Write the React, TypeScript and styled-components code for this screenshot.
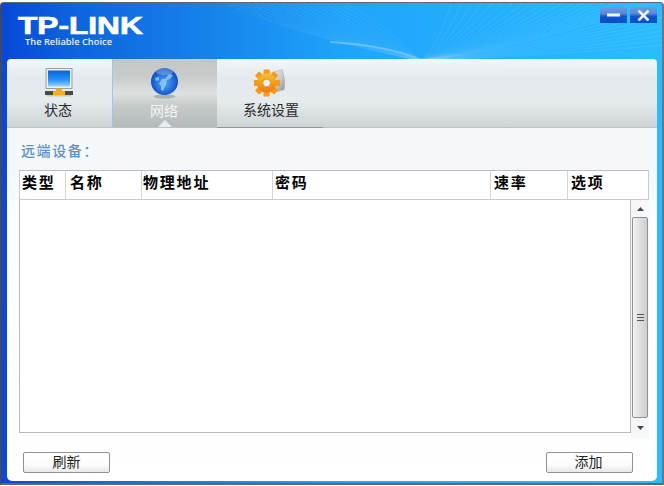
import React from "react";
import styled, { createGlobalStyle } from "styled-components";

const Global = createGlobalStyle`
  html, body { margin: 0; padding: 0; background: #fff; }
  body { font-family: "Noto Sans CJK SC", "Liberation Sans", sans-serif; }
  * { box-sizing: border-box; }
`;

const Page = styled.div`
  width: 664px;
  height: 486px;
  padding: 2px 0 1px;
`;

const Window = styled.div`
  position: relative;
  height: 483px;
  display: flex;
  flex-direction: column;
  padding: 0 5px 2px 5px;
  border: 2px solid #5f6670;
  border-top-width: 1px;
  border-right-color: #6a7680;
  border-left-color: #3c4a70;
  border-radius: 4px 4px 0 0;
  background: linear-gradient(90deg, #0748d8 0%, #0d62dc 10%, #1684ec 32%, #1fa4fb 52%, #2bbcff 100%);
  overflow: hidden;
`;

const Waves = styled.svg`
  position: absolute;
  left: 0;
  top: 0;
  pointer-events: none;
`;

const Header = styled.header`
  position: relative;
  height: 56px;
  flex: none;
  display: flex;
  justify-content: space-between;
  align-items: flex-start;
  padding: 14px 0 0 11px;
`;

const Logo = styled.div`
  display: flex;
  flex-direction: column;
  color: #fff;
  font-family: "Liberation Sans", sans-serif;
`;

const LogoMark = styled.div`
  font-size: 23px;
  line-height: 19px;
  font-weight: 700;
  transform: scaleX(1.375);
  transform-origin: left center;
  white-space: nowrap;
  -webkit-text-stroke: 0.7px #fff;
`;

const LogoTag = styled.div`
  font-family: "Open Sans", sans-serif;
  font-size: 9.3px;
  line-height: 11px;
  font-weight: 600;
  margin: 0 0 0 7px;
  color: #e8f2ff;
`;

const WinButtons = styled.div`
  display: flex;
  gap: 3px;
  margin-top: -10px;
`;

const WinButton = styled.button`
  width: 27px;
  height: 16px;
  padding: 0;
  border: 0;
  display: flex;
  align-items: center;
  justify-content: center;
  background: linear-gradient(180deg, #6c9be2 0%, #5a8ad8 40%, #0c55cc 60%, #0a50c8 100%);
`;

const TabBar = styled.nav`
  position: relative;
  flex: none;
  height: 69px;
  display: flex;
  border-radius: 4px 4px 0 0;
  background: linear-gradient(180deg, #f3f6f8 0%, #e3e9ee 30%, #e6ebed 62%, #cdd4d6 100%);
  border-bottom: 1px solid #bcc2c2;
`;

const Tab = styled.div<{ $active?: boolean; $w: number; $underline?: boolean }>`
  position: relative;
  width: ${(p) => p.$w}px;
  height: ${(p) => (p.$underline ? 69 : 68)}px;
  flex: none;
  display: flex;
  flex-direction: column;
  align-items: center;
  color: ${(p) => (p.$active ? "#f2f5f5" : "#2a2a2a")};
  font-size: 14px;
  line-height: 20px;
  padding-top: 7px;
  background: ${(p) =>
    p.$active
      ? "linear-gradient(180deg, #c3c7c6 0%, #c8cbca 25%, #dde1e1 50%, #c6cbca 68%, #b4baba 100%)"
      : "transparent"};
  border-left: ${(p) => (p.$active ? "1px solid #9cc8e4" : "0")};
  border-top: ${(p) => (p.$active ? "1px solid #a8d4ee" : "0")};
  border-bottom: ${(p) => (p.$underline ? "1px solid #8f9494" : "0")};
`;

const IconBox = styled.div<{ $shift: number }>`
  width: 32px;
  height: 32px;
  margin: 0 0 1px ${(p) => p.$shift}px;
  display: flex;
  align-items: center;
  justify-content: center;
`;

const TabLabel = styled.span<{ $shift: number }>`
  margin-left: ${(p) => p.$shift}px;
`;

const Notch = styled.span`
  position: absolute;
  left: 50%;
  bottom: 0;
  margin-left: -7px;
  width: 0;
  height: 0;
  border-left: 7px solid transparent;
  border-right: 7px solid transparent;
  border-bottom: 7px solid #e6f0f2;
`;

const Panel = styled.main`
  flex: 1;
  min-height: 0;
  display: flex;
  flex-direction: column;
  padding: 0 8px 0 12px;
  border-radius: 0 0 5px 5px;
  background: linear-gradient(180deg, #f4f8fa 0%, #f4f8fa 12%, #fbfcfd 25%, #fff 100%);
`;

const Title = styled.h2`
  margin: 12px 0 10px 2px;
  font-size: 14px;
  line-height: 20px;
  font-weight: 500;
  letter-spacing: 1.6px;
  color: #5b8fc9;
`;

const TableHead = styled.div`
  width: 630px;
  height: 30px;
  flex: none;
  display: grid;
  grid-template-columns: 45px 76px 131px 218px 77px 1fr;
  background: #fff;
  border: 1px solid #c8c9cb;
  border-top-color: #bcbdc0;
`;

const HeadCell = styled.div<{ $pad: number }>`
  padding-left: ${(p) => p.$pad}px;
  font-size: 15px;
  line-height: 22px;
  font-weight: 700;
  letter-spacing: 1.8px;
  color: #000;
  border-left: 1px solid #d4d5d7;
  &:first-child { border-left: 0; }
`;

const ListArea = styled.div`
  width: 630px;
  height: 238px;
  flex: none;
  display: flex;
  align-items: flex-start;
`;

const List = styled.div`
  width: 612px;
  height: 233px;
  background: #fff;
  border: 1px solid #b9babc;
  border-top: 0;
`;

const Scroll = styled.div`
  width: 18px;
  height: 238px;
  display: flex;
  flex-direction: column;
  background: #f6f7f8;
`;

const ScrollArrow = styled.div<{ $h: number }>`
  height: ${(p) => p.$h}px;
  flex: none;
  display: flex;
  align-items: center;
  justify-content: center;
`;

const Thumb = styled.div`
  flex: 1;
  margin: 0 1px;
  display: flex;
  align-items: center;
  justify-content: center;
  border: 1px solid #8e9092;
  border-radius: 2px;
  background: linear-gradient(90deg, #f2f2f2 0%, #e4e4e4 35%, #cdcdcd 100%);
`;

const Grip = styled.div`
  width: 7px;
  height: 7px;
  background: repeating-linear-gradient(180deg, #555 0 1px, transparent 1px 3px);
`;

const Actions = styled.footer`
  display: flex;
  justify-content: space-between;
  width: 610px;
  margin: 14px 0 0 4px;
`;

const Btn = styled.button<{ $nudge?: number }>`
  width: 87px;
  height: 21px;
  padding: 0 ${(p) => p.$nudge ?? 0}px 3px 0;
  font-family: inherit;
  font-size: 14px;
  line-height: 17px;
  color: #222;
  border: 1px solid #8f9294;
  border-radius: 2px;
  background: linear-gradient(180deg, #fff 0%, #fcfcfc 60%, #e6e8ec 100%);
`;

const Monitor = () => (
  <svg width="28" height="29" viewBox="0 0 28 29">
    <defs>
      <linearGradient id="scr" x1="0" y1="0" x2="0" y2="1">
        <stop offset="0" stopColor="#0a5fe0" />
        <stop offset="0.6" stopColor="#2a96f4" />
        <stop offset="1" stopColor="#9fd4fa" />
      </linearGradient>
    </defs>
    <rect x="1" y="0.5" width="26" height="20" fill="#eceff0" stroke="#9a9fa1" strokeWidth="1" />
    <rect x="3" y="2.5" width="22" height="16" fill="url(#scr)" />
    <rect x="11" y="20.5" width="6" height="2.5" fill="#f0a820" />
    <rect x="0" y="23" width="28" height="4" fill="#4d4a44" />
    <rect x="8" y="23" width="12" height="4" fill="#f5ae1e" />
    <rect x="2" y="27" width="24" height="1.5" fill="#c5c9ca" />
  </svg>
);

const Globe = () => (
  <svg width="29" height="32" viewBox="0 0 29 32">
    <defs>
      <radialGradient id="gl" cx="0.5" cy="0.55" r="0.6">
        <stop offset="0" stopColor="#5aa6f0" />
        <stop offset="0.65" stopColor="#1a66d8" />
        <stop offset="1" stopColor="#0a3aa8" />
      </radialGradient>
    </defs>
    <ellipse cx="14.5" cy="29.5" rx="11" ry="2" fill="#8f9494" opacity="0.6" />
    <circle cx="14.5" cy="14.5" r="13.5" fill="url(#gl)" />
    <path d="M9 17l3-5 3 0 4-5 4 1-3 4-3 1-1 5-3 6-2-1 0-4-2-2z M5 11l4-1 0 3-3 1z" fill="#8cc8f5" opacity="0.85" />
    <ellipse cx="14.5" cy="4.5" rx="9" ry="3.5" fill="#fff" opacity="0.25" />
  </svg>
);

const Gear = () => {
  const teeth = [0, 45, 90, 135, 180, 225, 270, 315];
  return (
    <svg width="33" height="29" viewBox="0 0 33 29">
      <defs>
        <linearGradient id="disc" x1="0" y1="0" x2="1" y2="1">
          <stop offset="0" stopColor="#f4f4f2" />
          <stop offset="0.6" stopColor="#c4c6c6" />
          <stop offset="1" stopColor="#85898a" />
        </linearGradient>
        <linearGradient id="gr" x1="0" y1="0" x2="0" y2="1">
          <stop offset="0" stopColor="#fbc02c" />
          <stop offset="1" stopColor="#ee7a10" />
        </linearGradient>
      </defs>
      <path d="M16 5 L29 1 Q33 11 31 22 L18 25 Z" fill="url(#disc)" stroke="#a5a8a8" strokeWidth="0.5" />
      <g transform="translate(13 15)">
        {teeth.map((a) => (
          <rect key={a} x="-3.2" y="-14" width="6.4" height="7" rx="1" fill="#f59a1c" transform={`rotate(${a})`} />
        ))}
        <circle r="10" fill="url(#gr)" />
        <circle r="4" fill="#f4efe0" stroke="#c46a10" strokeWidth="0.6" />
      </g>
    </svg>
  );
};

const fanRight = Array.from({ length: 30 }, (_, i) => {
  const t = i / 29;
  const ex = t < 0.7 ? 450 + (t / 0.7) * 212 : 662;
  const ey = t < 0.7 ? -2 : ((t - 0.7) / 0.3) * 42;
  const cx = 420 + (ex - 420) * 0.35 + 4;
  const cy = 57 + (ey - 57) * 0.12;
  return `M416 58 Q ${cx} ${cy}, ${ex} ${ey}`;
});

const fanLeft = Array.from({ length: 18 }, (_, i) => {
  const sx = 224 + i * 7;
  return `M${sx} 0 Q ${sx + 55} ${28 + i * 0.2}, 418 58`;
});

const columns: Array<[string, number]> = [
  ["类型", 2],
  ["名称", 4],
  ["物理地址", 1],
  ["密码", 2],
  ["速率", 3],
  ["选项", 3],
];

export default function App() {
  return (
    <Page>
      <Global />
      <Window>
        <Waves width="660" height="57" viewBox="0 0 660 57">
          {fanRight.map((d) => (
            <path key={d} d={d} fill="none" stroke="#fff" strokeOpacity="0.09" strokeWidth="1" />
          ))}
          {fanLeft.map((d) => (
            <path key={d} d={d} fill="none" stroke="#fff" strokeOpacity="0.08" strokeWidth="1" />
          ))}
          <path d="M328 39 C 365 41, 395 47, 420 57" fill="none" stroke="#bfe2ff" strokeOpacity="0.4" strokeWidth="2" />
        </Waves>
        <Header>
          <Logo>
            <LogoMark>TP-LINK</LogoMark>
            <LogoTag>The Reliable Choice</LogoTag>
          </Logo>
          <WinButtons>
            <WinButton aria-label="最小化">
              <svg width="13" height="4" viewBox="0 0 13 4"><rect width="13" height="3" y="0.5" fill="#eef4fc" /></svg>
            </WinButton>
            <WinButton aria-label="关闭">
              <svg width="13" height="11" viewBox="0 0 13 11"><path d="M1.5 0.5 L11.5 10.5 M11.5 0.5 L1.5 10.5" stroke="#eef4fc" strokeWidth="2.6" /></svg>
            </WinButton>
          </WinButtons>
        </Header>
        <TabBar>
          <Tab $w={105}>
            <IconBox $shift={-2}><Monitor /></IconBox>
            <TabLabel $shift={-3}>状态</TabLabel>
          </Tab>
          <Tab $w={105} $active>
            <IconBox $shift={-2}><Globe /></IconBox>
            <TabLabel $shift={-2}>网络</TabLabel>
            <Notch />
          </Tab>
          <Tab $w={106} $underline>
            <IconBox $shift={0}><Gear /></IconBox>
            <TabLabel $shift={2}>系统设置</TabLabel>
          </Tab>
        </TabBar>
        <Panel>
          <Title>远端设备：</Title>
          <TableHead>
            {columns.map(([h, pad]) => (
              <HeadCell key={h} $pad={pad}>{h}</HeadCell>
            ))}
          </TableHead>
          <ListArea>
            <List />
            <Scroll>
              <ScrollArrow $h={17}>
                <svg width="7" height="4" viewBox="0 0 7 4"><path d="M3.5 0L7 4H0z" fill="#4a4a4a" /></svg>
              </ScrollArrow>
              <Thumb><Grip /></Thumb>
              <ScrollArrow $h={20}>
                <svg width="7" height="4" viewBox="0 0 7 4"><path d="M0 0H7L3.5 4z" fill="#4a4a4a" /></svg>
              </ScrollArrow>
            </Scroll>
          </ListArea>
          <Actions>
            <Btn>刷新</Btn>
            <Btn $nudge={2}>添加</Btn>
          </Actions>
        </Panel>
      </Window>
    </Page>
  );
}
